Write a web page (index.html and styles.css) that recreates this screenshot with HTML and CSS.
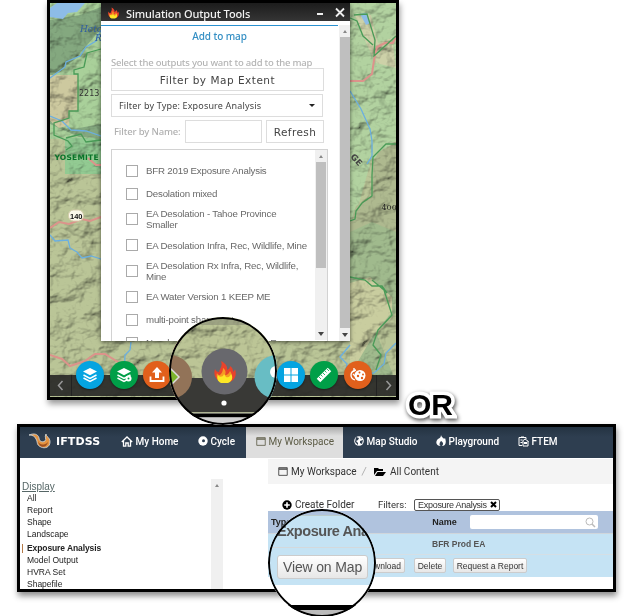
FILE: index.html
```html
<!DOCTYPE html>
<html lang="en">
<head>
<meta charset="utf-8">
<title>IFTDSS outputs</title>
<link rel="stylesheet" href="styles.css">
</head>
<body>
<svg class="defs" width="0" height="0">
  <defs>
    <filter id="relief" x="0" y="0" width="1" height="1">
      <feTurbulence type="fractalNoise" baseFrequency="0.045 0.06" numOctaves="4" seed="8"/>
      <feDiffuseLighting lighting-color="#ffffff" surfaceScale="9" diffuseConstant="1.12">
        <feDistantLight azimuth="225" elevation="58"/>
      </feDiffuseLighting>
    </filter>
    <symbol id="flame" viewBox="0 0 24 24">
      <path fill="#e8432b" d="M8 22C3 20 0 15 2 9c1 2 2 3 4 3 1-4 4-6 2-11 4 2 7 5 6 9 2-1 3-2 3-4 3 2 3 4 3 6 1-1 2-2 2-3 2 6 0 11-5 13z"/>
      <path fill="#f59b22" d="M8 22c-4-2-5-6-4-9 1 2 2 2 3 2 2-2 3-4 3-7 3 2 3 5 2 7 3 0 4-2 5-4 3 4 3 9-1 11z"/>
      <path fill="#fde725" d="M8 23c-4-2-4-5-3-8 1 2 3 2 5 1l1-2 2 3c3 1 4-1 5-3 3 4 0 8-3 9z"/>
    </symbol>
    <symbol id="window" viewBox="0 0 12 11"><path fill="none" stroke="currentColor" d="M.8.8h10.4v9.4H.8z"/><path stroke="currentColor" stroke-width="1.6" d="M1 2.5h10"/></symbol>
    <symbol id="layers" viewBox="0 0 16 16"><path fill="#fff" d="M8 1l7 3.6L8 8.200 1 4.600z"/><path fill="none" stroke="#fff" stroke-width="1.500" d="M1.500 8L8 11.300 14.500 8M1.500 11L8 14.300l6.500-3.300"/></symbol>
  </defs>
</svg>

<section class="map-frame">
  <svg class="terrain" viewBox="50 3 346 394">
    <rect x="50" y="3" width="346" height="394" fill="#bac597"/>
    <path fill="#a9d09a" d="M50 3h51v170H65v-34H50z"/>
    <path fill="#84a87f" d="M50 20l30-5 21-8v22L74 60 50 77zM50 120l18 10 33-6v14l-22-1-29-13z"/>
    <path fill="#cdc99f" d="M50 75h28v36h-9v14l-10 3-9-7z"/>
    <path fill="#92ca92" d="M65 138h36v36H65z"/>
    <path fill="#b2d2a0" d="M350 3h46v138l-25 20-17 60h-4z"/>
    <path fill="#cdd1a8" d="M355 15h16l7 28 14-5 4 30-20-5-10-20z"/>
    <path fill="#aeb98f" d="M396 143l-18 9-5 14-1 30-16 10-6 18v30l46 6z"/>
    <path fill="#a0ba8d" d="M350 232l22-10 24 10v80l-20 20 20 50h-46z"/>
    <path fill="#c9cd9f" d="M350 283l20-6 22 20v15l-18 22-24 41z"/>
    <rect class="shade" x="50" y="3" width="346" height="394" filter="url(#relief)"/>
    <path fill="#8dbce7" d="M50 8l7-5h28l-8 9-9 1-5 6-13-2zM360 14l6-1 4 10-4 2z"/>
    <g fill="none" stroke-width="1.300">
      <path stroke="#6bafe0" d="M50 78l15-11 1-5 14-6 6-9 10-6 5-11M50 116l12 5 9 9 15 1 15 5M50 235l5 6 13-1 2 8 7 4 5 6 9-2 10 3M131 342l-1 8-5 5-1 20M350 91l11 18 9 20 2 12v15l-5 8M350 345l-10 12 7 7-2 11M396 343l-10 10-2 11-10 9-13 2"/>
      <path stroke="#dc938b" stroke-width="2" d="M50 228l9-6 10 2 13-5 8 2 11-4M50 355l12 4 8 7 15-5 10-7h10l13 8M350 81h13l9-7 2-14 3-13 8-4h8l3-7M88 158l8 7h5"/>
      <path stroke="#499b57" d="M101 49l-14 4-3 14-10 3v4h4v37h-9v7l-15 5v12l14 6 4 5-6 4M66 138l15-4 5 8 15-2M354 15l13-1 8 26-1 16 22-20M396 144h-10l-13 13-1 18v21l-10 7-6 8-1 8-5 2M350 277l15 3 7 6 10 0 5 7M350 18l7 3 6 15 10 9M372 280l12 10 8 25-14 15-5 15 8 10-5 15"/>
    </g>
    <text class="water" x="80" y="32">Hetch</text><text class="water" x="95" y="41">R</text>
    <text class="elev" x="79" y="96">2213 m</text>
    <text class="park" x="54.500" y="160" textLength="44">YOSEMITE</text>
    <rect x="68.500" y="210" width="15" height="11" rx="5" fill="#fbf9eb" stroke="#d5cdab"/>
    <text class="road" x="70" y="218.500">140</text>
    <text class="range" transform="translate(350 157) rotate(48)">GE</text>
    <text class="elev4" x="381.500" y="210">4005</text>
  </svg>

  <div class="dialog">
    <header class="dialog-title">
      <svg width="13" height="12"><use href="#flame"/></svg>
      <span>Simulation Output Tools</span>
      <svg class="controls" width="29" height="12"><path stroke="#eee" stroke-width="1.800" d="M1 7h6M20 1.500l8 8m0-8l-8 8"/></svg>
    </header>
    <div class="dialog-body">
      <div class="pane">
        <div class="add">Add to map</div>
        <div class="hint">Select the outputs you want to add to the map</div>
        <div class="field extent">Filter by Map Extent</div>
        <div class="field type"><span>Filter by Type: Exposure Analysis</span><i></i></div>
        <div class="name-row"><span>Filter by Name:</span><div class="field name"></div><div class="field refresh">Refresh</div></div>
        <div class="outputs">
          <ul>
            <li><b></b><span>BFR 2019 Exposure Analysis</span></li>
            <li><b></b><span>Desolation mixed</span></li>
            <li class="two"><b></b><span>EA Desolation - Tahoe Province<br>Smaller</span></li>
            <li><b></b><span>EA Desolation Infra, Rec, Wildlife, Mine</span></li>
            <li class="two"><b></b><span>EA Desolation Rx Infra, Rec, Wildlife,<br>Mine</span></li>
            <li><b></b><span>EA Water Version 1 KEEP ME</span></li>
            <li><b></b><span>multi-point shape 1 N</span></li>
            <li><b></b><span>New landscape EA FTE 2019 E</span></li>
          </ul>
          <div class="bar inner"><i class="up"></i><div class="thumb"></div><i class="down"></i></div>
        </div>
      </div>
      <div class="bar outer"><i class="up"></i><div class="thumb"></div><i class="down"></i></div>
    </div>
  </div>

  <div class="dock">
    <svg class="prev" width="22" height="21"><path d="M12.500 6l-4 4.500 4 4.500" fill="none" stroke="#999" stroke-width="1.500"/></svg>
    <svg class="next" width="20" height="21"><path d="M9.500 6l4 4.500-4 4.500" fill="none" stroke="#999" stroke-width="1.500"/></svg>
  </div>
  <div class="tools">
    <div class="tool blue"><svg width="16" height="16"><use href="#layers"/></svg></div>
    <div class="tool green"><svg width="16" height="16"><use href="#layers"/><circle cx="12.500" cy="11.500" r="3" fill="#fff"/><circle cx="12.500" cy="11.500" r="1" fill="#009f48"/></svg></div>
    <div class="tool orange"><svg width="16" height="16"><path fill="#fff" d="M8 0l5 5.500h-3V11H6V5.500H3z"/><path fill="none" stroke="#fff" stroke-width="1.800" d="M1.500 9.500V14h13V9.500"/></svg></div>
    <div class="tool blue right"><svg width="16" height="16"><path fill="#fff" d="M1 1h6.500v6.500H1zM8.500 1H15v6.500H8.500zM1 8.500h6.500V15H1zM8.500 8.500H15V15H8.500z"/></svg></div>
    <div class="tool green"><svg width="16" height="16"><path stroke="#fff" stroke-width="5" d="M2.500 13.500l11-11"/><path stroke="#009f48" stroke-width=".8" d="M3 10l2 2M5 8l1.500 1.500M7 6l2 2M9 4l1.500 1.500M11 2l2 2"/></svg></div>
    <div class="tool orange"><svg width="16" height="16"><circle cx="10" cy="8.500" r="5.500" fill="#fff"/><path fill="none" stroke="#fff" stroke-width="1.300" d="M6 3C2 4 1 6 1 8s1 4 4 5M4 1v4M3 7l3 3"/><g fill="#e1601c"><circle cx="9.500" cy="5.500" r="1"/><circle cx="13" cy="7.500" r="1"/><circle cx="8" cy="9" r="1.200"/><circle cx="12" cy="11" r="1.200"/></g></svg></div>
  </div>
</section>

<section class="work-frame">
  <nav>
    <div class="brand"><svg width="24" height="19" viewBox="0 0 24 19"><path fill="#e49340" stroke="#cbd0d3" stroke-width=".9" d="M1 3c5-2 9-1 10 3 0 3 3 5 6 3 2-2-1-4 1-7 0 3 4 3 4 8 0 5-5 7-9 5C8 13 10 10 8 7 7 4 4 3 1 3z"/><path d="M10 9c1 4 6 5 10 1-1 6-9 7-10-1z" fill="#9e501f"/></svg><span>IFTDSS</span></div>
    <div class="link home"><svg width="12" height="11" viewBox="0 0 12 11"><path fill="none" stroke="#fff" stroke-width="1.300" d="M.8 6L6 1l5.200 5M2.500 5v5.200h2.300V7h2.400v3.200h2.300V5"/></svg><span>My Home</span></div>
    <div class="link cycle"><svg width="10" height="10"><circle cx="5" cy="5" r="4.700" fill="#fff"/><circle cx="5.500" cy="4.800" r="1.500" fill="#2e3e50"/></svg><span>Cycle</span></div>
    <div class="link active"><svg width="10" height="9"><use href="#window"/></svg><span>My Workspace</span></div>
    <div class="link studio"><svg width="10" height="10"><circle cx="5" cy="5" r="4.800" fill="#fff"/><path fill="#2e3e50" d="M2 1l3 1-1 2-2 1 2 2v2L1 6zM6 5l3-1-1 4-2-1zM6 1l2 1-1 1z"/></svg><span>Map Studio</span></div>
    <div class="link play"><svg width="10" height="12" viewBox="0 0 10 12"><path fill="#fff" d="M5 0c0 2 3 3 3 4l1-1c2 5 0 8-3 8 2-2 1-4-1-5-2 2-2 4 0 5-5 0-6-4-3-7C4 3 5 2 5 0z"/></svg><span>Playground</span></div>
    <div class="link ftem"><svg width="11" height="11" viewBox="0 0 11 11"><path fill="none" stroke="#fff" d="M8 3V1.500H1v8h3M3 1h3M4.500 5L7 3l3.500 2.500M5 5v5h5V5M2.500 4h2M2.500 6.500h2"/><path fill="#fff" d="M6 6h3v2H6z"/></svg><span>FTEM</span></div>
  </nav>
  <div class="work">
    <aside>
      <h2>Display</h2>
      <ul><li>All</li><li>Report</li><li>Shape</li><li>Landscape</li><li class="on">Exposure Analysis</li><li>Model Output</li><li>HVRA Set</li><li>Shapefile</li></ul>
    </aside>
    <div class="bar side"><i class="up"></i></div>
    <main>
      <div class="crumbs"><svg width="10" height="9"><use href="#window"/></svg><span class="c1">My Workspace</span><em>/</em><svg class="folder" width="13" height="10"><path d="M1 9V1h4l1 1h4v2H4L1 8zM2 9l2.500-4H13l-3 4z"/></svg><span class="c2">All Content</span></div>
      <div class="actions"><svg width="10" height="10"><circle cx="5" cy="5" r="4.700"/><path stroke="#fff" stroke-width="1.600" d="M5 2.200v5.600M2.200 5h5.600"/></svg><span class="create">Create Folder</span><span class="filters">Filters:</span><span class="chip">Exposure Analysis <svg width="7" height="7"><path d="M1 1l5 5m0-5L1 6" stroke="#000" stroke-width="2"/></svg></span></div>
      <div class="thead"><b>Type</b><b class="nm">Name</b><div class="search"><svg width="11" height="11"><circle cx="4.500" cy="4.500" r="3.500" fill="none" stroke="#bbb"/><path stroke="#bbb" stroke-width="1.500" d="M7 7l3 3"/></svg></div></div>
      <div class="trow">BFR Prod EA</div>
      <div class="tbtns"><span class="btn down-btn">Download</span><span class="btn">Delete</span><span class="btn req">Request a Report</span></div>
    </main>
  </div>
</section>

<div class="or">OR</div>

<div class="lens top-lens">
  <svg viewBox="170 317 108 108" width="108" height="108">
    <rect x="170" y="317" width="108" height="62" fill="#bcc596"/>
    <rect class="shade" x="170" y="317" width="108" height="62" filter="url(#relief)"/>
    <path fill="#888c77" opacity=".6" d="M180 317h90v8h-90z"/>
    <path stroke="#db8b7d" stroke-width="2" d="M172 352l9-12"/>
    <path fill="#393936" d="M170 378h108v34H170z"/>
    <path fill="#aeb493" d="M170 412h108v1.500H170z"/>
    <path fill="#000" d="M170 413.500h108v4H170z"/>
    <path fill="#d2d2d2" d="M170 417.500h108v8H170z"/>
    <circle cx="171" cy="377" r="22" fill="#927358"/>
    <path d="M170 367l10 10-10 10" fill="#7cb52c" stroke="#ddd" stroke-width="1.500"/>
    <circle cx="277.500" cy="377" r="22" fill="#68bdc4"/><circle cx="277" cy="372" r="6" fill="#fff"/>
    <circle cx="225.500" cy="371.500" r="23" fill="#68686d"/>
    <use href="#flame" x="214" y="360" width="24" height="24"/>
    <circle cx="225" cy="403" r="2.600" fill="#fff"/>
  </svg>
</div>

<div class="lens low-lens">
  <div class="z-head"></div>
  <div class="z-row">Exposure Analysis</div>
  <div class="z-actions"><span>View on Map</span></div>
  <div class="z-edge"></div>
</div>
</body>
</html>
```
FILE: styles.css
```css
* { box-sizing: border-box; }
body { margin: 0; width: 630px; height: 616px; overflow: hidden; position: relative; background: #fff; font-family: "Liberation Sans", Arial, sans-serif; }
ul { list-style: none; margin: 0; padding: 0; }
svg { flex: none; display: block; }
span { white-space: nowrap; }
.defs { position: absolute; }

.map-frame { position: relative; margin-left: 47px; width: 352px; height: 400px; border: 3px solid #000; box-shadow: 1px 4px 6px rgba(0,0,0,.4); }
.terrain { width: 346px; height: 394px; }
.shade { mix-blend-mode: multiply; opacity: .6; }
.water { font: italic 9px "DejaVu Serif", serif; fill: #315fa0; }
.elev { font: 8px "DejaVu Sans", sans-serif; fill: #333; }
.elev4 { font: 8px "DejaVu Serif", serif; fill: #222; }
.park { font: bold 7.500px "DejaVu Sans", sans-serif; fill: #087328; }
.road { font: bold 7.500px "Liberation Sans", sans-serif; fill: #111; }
.range { font: bold 8.500px "DejaVu Sans", sans-serif; fill: #444; }

.dialog { position: absolute; left: 51px; top: 0; width: 249px; height: 338px; background: #fff; overflow: hidden; box-shadow: 0 1px 4px rgba(0,0,0,.6); color: #444; }
.dialog-title { height: 18px; padding: 2px 5px 0 6px; display: flex; align-items: center; background: linear-gradient(#1c1c1c, #353535); color: #f2f2f2; font: 500 11px "Noto Sans", sans-serif; }
.dialog-title span { margin-left: 6px; letter-spacing: -.12px; }
.controls { margin-left: auto; }
.dialog-body { display: flex; height: 320px; padding-top: 4px; }
.pane { width: 237px; flex: none; border-top: 1px solid #2a91d0; padding-left: 10px; font-family: "DejaVu Sans", sans-serif; }
.add { height: 31px; padding: 4px 0 0; text-align: center; margin-left: -10px; color: #348fc4; font: 500 10px/13px "Noto Sans", sans-serif; letter-spacing: -.1px; }
.hint { height: 11px; font: 500 9.500px/12px "Noto Sans", sans-serif; letter-spacing: -.21px; color: #b4b4b4; white-space: nowrap; }
.field { border: 1px solid #ddd; background: #fff; display: flex; align-items: center; }
.extent { width: 213px; height: 23px; justify-content: center; font-size: 10.500px; letter-spacing: .5px; }
.type { width: 212px; height: 23px; margin-top: 3px; padding: 0 7px; justify-content: space-between; font: 9px "Noto Sans", sans-serif; letter-spacing: .17px; }
.type i { border: 3px solid transparent; border-top-color: #222; border-bottom: 0; }
.name-row { display: flex; align-items: center; margin-top: 3px; padding-left: 3px; }
.name-row > span { width: 71px; color: #b0b0b0; font: 500 9.500px "Noto Sans", sans-serif; letter-spacing: -.15px; }
.name { width: 77px; height: 23px; }
.refresh { width: 58px; height: 23px; margin-left: 4px; justify-content: center; font-size: 10.500px; letter-spacing: .4px; }
.outputs { width: 217px; height: 200px; margin-top: 6px; border: 1px solid #d2d2d2; display: flex; padding-top: 1px; }
.outputs ul { flex: 1; min-width: 0; padding: 8px 0 0 14px; font: 9.700px/11px "Liberation Sans", sans-serif; letter-spacing: -.19px; color: #686868; }
.outputs li { height: 23px; display: flex; align-items: center; }
.outputs .two { height: 28.500px; }
.outputs b { width: 12px; height: 12px; border: 1px solid #aaa; margin-right: 8px; flex: none; }
.bar { background: #f0f0f0; display: flex; flex-direction: column; align-items: center; flex: none; }
.bar .up { border: 2.500px solid transparent; border-bottom: 3px solid #888; border-top: 0; margin: 5px 0 4px; }
.bar .down { border: 3px solid transparent; border-top: 4px solid #444; border-bottom: 0; }
.bar .thumb { background: #bfbfbf; width: 10px; }
.inner { width: 12px; height: 190px; margin-top: -1px; }
.inner .thumb { height: 106px; margin-bottom: 64px; }
.outer { width: 11px; margin-left: 1px; }
.outer .thumb { height: 291px; margin-bottom: 5px; }

.dock { position: absolute; left: 0; right: 0; bottom: 1px; height: 21px; background: rgba(42,42,40,.93); display: flex; justify-content: space-between; }
.prev { border-right: 1px solid #222; }
.next { border-left: 1px solid #222; }
.tools { position: absolute; left: 26px; top: 358px; display: flex; gap: 5.500px; }
.tool { width: 28px; height: 28px; border-radius: 50%; display: flex; align-items: center; justify-content: center; box-shadow: 0 1px 2px rgba(0,0,0,.4); }
.blue { background: #05a4e1; } .green { background: #009f48; } .orange { background: #e1601c; }
.tool.right { margin-left: 100px; }

.work-frame { margin: 24px 0 0 17px; width: 599px; height: 168px; border: 3px solid #000; box-shadow: 1px 4px 6px rgba(0,0,0,.45); background: #fff; overflow: hidden; color: #333; }
nav { height: 31px; display: flex; background: linear-gradient(#243342, #2e3e50 10px); color: #fff; font: 500 10px Roboto, sans-serif; }
.brand, .link { display: flex; align-items: center; padding-bottom: 3px; }
.brand { width: 101px; padding-left: 8px; font: bold 11px "DejaVu Sans", sans-serif; }
.brand span { margin-left: 4px; letter-spacing: .1px; }
.link span { margin-left: 2.500px; }
.home { width: 77px; } .cycle { width: 48px; }
.active { width: 97px; padding-left: 10px; background: linear-gradient(#aaa, #dedede 9px); color: #5c5b45; font-weight: 400; }
.studio { width: 93px; padding-left: 11px; } .play { width: 82px; }
.work { display: flex; height: 131px; }
aside { width: 191px; padding: 23px 0 0 2px; font-size: 8.500px; color: #222; }
h2 { margin: 0; font: 10px/11px "Liberation Sans", sans-serif; text-decoration: underline; color: #566; }
aside li { height: 12px; line-height: 12px; padding-left: 5px; }
aside .on { height: 14px; line-height: 16px; font-weight: bold; letter-spacing: -.1px; background: linear-gradient(#b57a48, #b57a48) 0 4px / 1px 9px no-repeat; }
.side { width: 12px; margin-top: 21px; }
.side .up { margin-top: 5px; }
main { flex: 1; margin-left: 45px; font: 10px Roboto, sans-serif; }
.crumbs { height: 25px; margin-top: 1px; padding-left: 10px; background: #f4f4f4; display: flex; align-items: center; color: #333; }
.c1 { margin-left: 3px; width: 65px; } .crumbs em { width: 4px; margin: 0 7px 0 6px; color: #aaa; } .c2 { margin-left: 4px; }
.actions { height: 27px; padding: 14px 0 0 14px; display: flex; align-items: center; }
.create { margin-left: 3px; width: 83px; } .filters { width: 36px; font-size: 9.500px; }
.chip { display: flex; align-items: center; gap: 3px; height: 12px; width: 86px; border: 1px solid #555; border-radius: 2px; padding-left: 3px; font: 9px "Liberation Sans", sans-serif; letter-spacing: -.28px; }
.thead { height: 22px; display: flex; align-items: center; padding-left: 3px; background: #b0c3de; font: bold 9px "Liberation Sans", sans-serif; color: #222; }
.thead .nm { margin-left: 141px; }
.search { width: 128px; height: 14px; margin-left: 13px; background: #fff; border-radius: 2px; display: flex; align-items: center; justify-content: flex-end; padding-right: 2px; }
.trow { height: 22px; padding: 5px 0 0 164px; border-top: 1px solid #d0d6db; border-bottom: 1px solid #d5dfe5; background: #c5e3f4; font: bold 8.500px "Liberation Sans", sans-serif; color: #555; }
.tbtns { height: 22px; padding: 0 0 1px 81px; background: #c5e3f4; display: flex; align-items: center; gap: 9px; font: 8.500px "Liberation Sans", sans-serif; }
.btn { height: 15px; display: flex; align-items: center; justify-content: center; width: 32px; border: 1px solid #ccc; border-radius: 2px; background: linear-gradient(#fff, #e7e7e7); }
.down-btn { width: 56px; justify-content: flex-end; padding-right: 3px; } .req { width: 74px; margin-left: -2px; }

.or { position: absolute; left: 408px; top: 388px; font: bold 30px/34px "Liberation Sans", sans-serif; color: #000; -webkit-text-stroke: 7px #fff; paint-order: stroke fill; filter: drop-shadow(1px 2px 2px rgba(0,0,0,.7)); }

.lens { position: absolute; width: 108px; height: 108px; border-radius: 50%; overflow: hidden; background: #fff; }
.lens::after { content: ""; position: absolute; inset: 0; border: 2px solid #000; border-radius: 50%; }
.top-lens { left: 169px; top: 317px; }
.low-lens { left: 268px; top: 509px; color: #555; }
.z-head { height: 7px; background: #b0c3de; border-bottom: 1px solid #bcc; }
.z-row { height: 32px; padding: 7px 0 0 9px; background: #c5e3f4; border-bottom: 1px solid #d4d9dc; font: bold 14.500px/16px "Liberation Sans", sans-serif; letter-spacing: -.45px; white-space: nowrap; }
.z-actions { height: 37px; padding: 7px 0 0 9px; background: #c5e3f4; }
.z-actions span { display: flex; align-items: center; justify-content: center; width: 91px; height: 24px; border: 1px solid #ccc; border-radius: 3px; background: linear-gradient(#fff, #e7e7e7); font-size: 14px; letter-spacing: -.15px; }
.z-edge { height: 14px; margin-top: 20px; border-top: 5px solid #000; background: #bbb; }
```
